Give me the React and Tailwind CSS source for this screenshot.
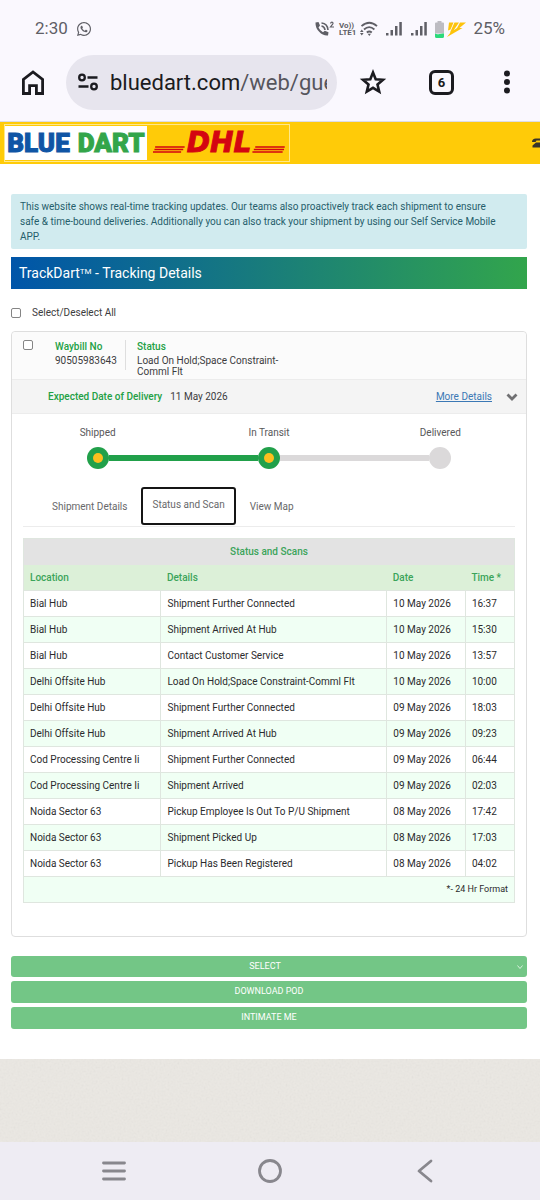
import { FaWhatsapp } from 'react-icons/fa';

const scans = [
    { location: 'Bial Hub', details: 'Shipment Further Connected', date: '10 May 2026', time: '16:37' },
    { location: 'Bial Hub', details: 'Shipment Arrived At Hub', date: '10 May 2026', time: '15:30' },
    { location: 'Bial Hub', details: 'Contact Customer Service', date: '10 May 2026', time: '13:57' },
    { location: 'Delhi Offsite Hub', details: 'Load On Hold;Space Constraint-Comml Flt', date: '10 May 2026', time: '10:00' },
    { location: 'Delhi Offsite Hub', details: 'Shipment Further Connected', date: '09 May 2026', time: '18:03' },
    { location: 'Delhi Offsite Hub', details: 'Shipment Arrived At Hub', date: '09 May 2026', time: '09:23' },
    { location: 'Cod Processing Centre Ii', details: 'Shipment Further Connected', date: '09 May 2026', time: '06:44' },
    { location: 'Cod Processing Centre Ii', details: 'Shipment Arrived', date: '09 May 2026', time: '02:03' },
    { location: 'Noida Sector 63', details: 'Pickup Employee Is Out To P/U Shipment', date: '08 May 2026', time: '17:42' },
    { location: 'Noida Sector 63', details: 'Shipment Picked Up', date: '08 May 2026', time: '17:03' },
    { location: 'Noida Sector 63', details: 'Pickup Has Been Registered', date: '08 May 2026', time: '04:02' },
];

const steps = [
    { label: 'Shipped', done: true },
    { label: 'In Transit', done: true },
    { label: 'Delivered', done: false },
];

function Signal() {
    return (
        <svg className="w-4 h-4 shrink-0" viewBox="0 0 16 16" fill="#5f5f66">
            <rect x="0" y="12" width="2.500" height="2.500" />
            <rect x="4.500" y="9" width="2.500" height="5.500" />
            <rect x="9" y="5" width="2.500" height="9.500" />
            <rect x="13.300" y="1" width="2.500" height="13.500" />
        </svg>
    );
}

function StatusBar() {
    return (
        <div className="h-[55px] px-[35px] pt-[3px] flex items-center justify-between text-[17px] text-[#5f5f66]">
            <div className="flex items-center gap-2">
                <span>2:30</span>
                <FaWhatsapp className="w-4 h-4" />
            </div>
            <div className="flex items-center">
                <svg className="w-5 h-4" viewBox="0 0 20 16" fill="none" stroke="#5f5f66">
                    <path
                        d="M.5 1.500 3.500 1l1.500 3.500L3.500 6.500q1.500 3.300 4.500 4.700l1.800-1.500 3.700 1.500-.5 3.300q-5 .5-8.800-3.700Q.3 7 .5 1.500z"
                        fill="#5f5f66"
                        stroke="none"
                    />
                    <path d="M6.500 2q6 .5 6.500 7M6.500 5q3 .5 3.500 4" strokeWidth="1.600" />
                    <path d="M15.500 2.500q.5-1.500 1.700-1.300 1.500.6.3 2.200L15.500 6h3.500" strokeWidth="1.200" />
                </svg>
                <div className="ml-1 flex flex-col text-[8px] leading-[7px] font-bold">
                    <span>Vo))</span>
                    <span>LTE1</span>
                </div>
                <svg className="w-[18px] h-4 ml-1" viewBox="0 0 18 16" fill="none" stroke="#5f5f66" strokeWidth="1.800">
                    <path d="M1.500 5.200q7.800-7 15.500 0M4 8.500q5.200-4.800 10.400 0M6.800 11.500q2.500-2 5 0" />
                    <path d="M9.300 15 7.600 12.800h3.400z" fill="#5f5f66" stroke="none" />
                    <path d="M0 11 1.800 8.600 3.600 11zM0 12l1.800 2.400L3.600 12z" fill="#5f5f66" stroke="none" />
                </svg>
                <div className="flex gap-[9px] ml-2">
                    <Signal />
                    <Signal />
                </div>
                <svg className="w-[9px] h-[17px] ml-2" viewBox="0 0 9 17">
                    <path d="M2.500 0h4v1.500H8q1 0 1 1V12.500H0v-10q0-1 1-1h1.500z" fill="#bdbcc2" />
                    <path d="M0 12.500q2 1.300 4.500.5t4.500-.5v3q0 1.500-1.500 1.500h-6Q0 17 0 15.500z" fill="#2cd97b" />
                </svg>
                <svg className="w-[19px] h-[15px] ml-[3px]" viewBox="0 0 19 15" fill="#fdc30b">
                    <path d="M2 .5h4.500L3.500 7.500 1 8.500zM7.500.5h4.500L5.500 10 3 10.500zM13 .5h6L12.500 6h3L6 11.500 0 15l3.500-4.500L10 6z" />
                </svg>
                <span className="ml-[7px]">25%</span>
            </div>
        </div>
    );
}

function BrowserBar() {
    return (
        <div className="h-[67px] pb-3 pl-[21px] pr-[22px] flex items-center border-b border-[#dddce4] text-[#1b1b20]">
            <button aria-label="Home">
                <svg className="w-6 h-7" viewBox="0 0 24 28" fill="none" stroke="currentColor" strokeWidth="2.800">
                    <path d="M2.400 25.500V11.500L12 4l9.600 7.500v14h-6.200v-7.800H8.600v7.800z" />
                </svg>
            </button>
            <label className="ml-[21px] h-[55px] flex-1 min-w-0 rounded-full bg-[#e7e5ee] pl-3 pr-[10px] flex items-center gap-3">
                <svg className="w-5 h-5 shrink-0" viewBox="0 0 20 20" fill="none" stroke="currentColor" strokeWidth="2.300">
                    <circle cx="4" cy="5.500" r="2.800" />
                    <circle cx="16" cy="14.500" r="2.800" />
                    <path d="M9.500 5.500h10M.5 14.500h10" />
                </svg>
                <span className="flex-1 min-w-0 overflow-hidden whitespace-nowrap text-[22px]">
                    bluedart.com<span className="text-[#56555d]">/web/gue</span>
                </span>
            </label>
            <button aria-label="Bookmark" className="ml-[21px]">
                <svg className="w-[30px] h-[30px]" viewBox="0 0 30 30" fill="none" stroke="currentColor" strokeWidth="2.600">
                    <path d="M15 5.500l2.700 6.700 7.300.6-5.500 4.700 1.700 7.100-6.200-3.800-6.200 3.800 1.700-7.100L5 12.800l7.300-.6z" />
                </svg>
            </button>
            <button
                aria-label="Tabs"
                className="ml-[41px] w-[25px] h-[25px] rounded-md border-[3px] border-[#1b1b20] text-[13px] leading-none font-bold flex items-center justify-center"
            >
                6
            </button>
            <button aria-label="Menu" className="ml-[42px]">
                <svg className="w-[22px] h-6" viewBox="0 0 22 24" fill="currentColor">
                    <circle cx="11" cy="3.500" r="3" />
                    <circle cx="11" cy="12" r="3" />
                    <circle cx="11" cy="20.500" r="3" />
                </svg>
            </button>
        </div>
    );
}

function SiteHeader() {
    return (
        <header className="h-[42px] pl-1 bg-[#ffcb08] flex items-center justify-between overflow-hidden">
            <div className="h-[38px] w-[286px] border border-[#ffe88a] flex items-center">
                <div className="h-[34px] w-[142px] bg-white flex items-center justify-center gap-2 text-[26px] leading-none font-black [-webkit-text-stroke:1px_currentColor]">
                    <span className="text-[#0f55a5]">BLUE</span>
                    <span className="text-[#33a54a]">DART</span>
                </div>
                {/* DHL wordmark with its speed lines */}
                <div className="flex-1 pl-[6px] pr-1 flex items-center text-[#d40511]">
                    <svg className="flex-1 h-5" viewBox="0 0 24 20" preserveAspectRatio="none" stroke="currentColor">
                        <path d="M1.500 14h21M1 16.500h20.500M0 19h20" strokeWidth="1.500" />
                    </svg>
                    <span className="font-['DejaVu_Sans'] font-bold italic text-[28px] leading-none [-webkit-text-stroke:1px_currentColor]">
                        DHL
                    </span>
                    <svg className="flex-1 h-5" viewBox="0 0 24 20" preserveAspectRatio="none" stroke="currentColor">
                        <path d="M3 14h21M2 16.500h21.500M1 19h21.500" strokeWidth="1.500" />
                    </svg>
                </div>
            </div>
            <svg className="w-2 h-[10px]" viewBox="0 0 8 10" fill="#38342a">
                <path d="M0 4Q0 .5 4 .5h4v2H4.500L3.500 4zM.5 9.500V7.500L4 4.500h4v5z" />
            </svg>
        </header>
    );
}

function Progress() {
    return (
        <div className="grid grid-cols-3 pt-3">
            {steps.map((step, i) => (
                <div key={step.label} className="flex flex-col items-center gap-[7px]">
                    <span className="text-[10px] leading-[14px] text-[#58585a]">{step.label}</span>
                    <div className="w-full flex items-center">
                        <div className={`flex-1 h-[6px] ${i === 0 ? '' : step.done ? 'bg-[#21a04a]' : 'bg-[#dbd9da]'}`} />
                        <div
                            className={`w-[22px] h-[22px] rounded-full flex items-center justify-center ${step.done ? 'bg-[#21a04a]' : 'bg-[#dbd9da]'}`}
                        >
                            {step.done && <div className="w-[10px] h-[10px] rounded-full bg-[#fcbf1e]" />}
                        </div>
                        <div
                            className={`flex-1 h-[6px] ${i === 2 ? '' : steps[i + 1].done ? 'bg-[#21a04a]' : 'bg-[#dbd9da]'}`}
                        />
                    </div>
                </div>
            ))}
        </div>
    );
}

function ScanTable() {
    return (
        <table className="w-full table-fixed border-collapse border border-[#dfe6df] text-[10px] text-left text-[#2b2b2d]">
            <colgroup>
                <col className="w-[28%]" />
                <col className="w-[46%]" />
                <col className="w-[16%]" />
                <col className="w-[10%]" />
            </colgroup>
            <thead className="text-[#3ba45a]">
                <tr className="h-[26px] bg-[#e3e3e3]">
                    <th colSpan={4} className="text-center font-medium">Status and Scans</th>
                </tr>
                <tr className="h-[26px] bg-[#dcf0d8]">
                    <th className="px-[6px] font-medium">Location</th>
                    <th className="px-[6px] font-medium">Details</th>
                    <th className="px-[6px] font-medium">Date</th>
                    <th className="px-[6px] font-medium whitespace-nowrap">Time *</th>
                </tr>
            </thead>
            <tbody>
                {scans.map((scan, i) => (
                    <tr key={i} className="h-[26px] bg-white even:bg-[#f0fff4]">
                        <td className="px-[6px] border border-[#dfe6df]">{scan.location}</td>
                        <td className="px-[6px] border border-[#dfe6df]">{scan.details}</td>
                        <td className="px-[6px] border border-[#dfe6df]">{scan.date}</td>
                        <td className="px-[6px] border border-[#dfe6df]">{scan.time}</td>
                    </tr>
                ))}
                <tr className="h-[26px] bg-[#f0fff4]">
                    <td colSpan={4} className="px-[6px] text-right text-[9px]">*- 24 Hr Format</td>
                </tr>
            </tbody>
        </table>
    );
}

function Shipment() {
    return (
        <section className="mt-[11px] border border-[#dedede] rounded bg-white pb-[33px]">
            <div className="h-[47px] pt-2 pl-[11px] bg-[#fbfbfb] rounded-t flex items-start text-[10px] leading-[11px] text-[#3c3c3e]">
                <input
                    type="checkbox"
                    aria-label="Select waybill 90505983643"
                    className="appearance-none w-[10px] h-[10px] border border-[#858585] rounded-[2px] bg-white"
                />
                <div className="ml-[22px] w-[71px] pb-1 border-r border-[#dedede]">
                    <div className="mb-[2px] leading-[13px] font-medium text-[#23a045]">Waybill No</div>
                    <div>90505983643</div>
                </div>
                <div className="ml-[11px] w-[160px]">
                    <div className="mb-[2px] leading-[13px] font-medium text-[#23a045]">Status</div>
                    <div>Load On Hold;Space Constraint-Comml Flt</div>
                </div>
            </div>
            <div className="h-[35px] pl-9 pr-2 bg-[#f4f4f4] border-y border-[#ececec] flex items-center text-[10px]">
                <span className="font-medium text-[#23a045]">Expected Date of Delivery</span>
                <span className="ml-2 text-[#3c3c3e]">11 May 2026</span>
                <a href="#details" className="ml-auto mr-[14px] underline text-[#3b78b5]">More Details</a>
                <button aria-label="Collapse">
                    <svg className="w-3 h-3" viewBox="0 0 12 12" fill="none" stroke="#707072" strokeWidth="2.800">
                        <path d="M1.500 3.500 6 8l4.500-4.500" />
                    </svg>
                </button>
            </div>
            <Progress />
            <div className="px-[11px]">
                <div className="mt-[18px] pl-[17px] flex items-center border-b border-[#ececec] text-[10px] text-[#68686a]">
                    <button className="px-3">Shipment Details</button>
                    <button className="mx-[2px] mb-px h-[38px] px-[9px] pb-1 border-2 border-[#151515] rounded-[3px]">Status and Scan</button>
                    <button className="px-3">View Map</button>
                </div>
                <div className="mt-[11px]">
                    <ScanTable />
                </div>
            </div>
        </section>
    );
}

function Actions() {
    return (
        <div className="mt-[19px] flex flex-col gap-1 text-[9px] text-white">
            <div className="relative">
                <select
                    aria-label="Select an action"
                    className="block w-full h-[21px] pr-2 appearance-none rounded-[3px] bg-[#73c686] [text-align-last:center]"
                >
                    <option>SELECT</option>
                </select>
                <svg className="absolute right-1 top-2 w-[6px] h-[6px]" viewBox="0 0 6 6" fill="none" stroke="#d5f0dc">
                    <path d="M.5 1.500 3 4.500l2.500-3" />
                </svg>
            </div>
            <button className="h-[22px] rounded-[3px] bg-[#73c686]">DOWNLOAD POD</button>
            <button className="h-[22px] rounded-[3px] bg-[#73c686]">INTIMATE ME</button>
        </div>
    );
}

export default function App() {
    return (
        <div className="min-h-screen flex flex-col bg-[#faf8fe] font-[Roboto,sans-serif]">
            <StatusBar />
            <BrowserBar />
            <SiteHeader />
            <main className="bg-white py-[30px] pl-[11px] pr-[13px]">
                <p className="py-[5px] pl-[9px] pr-6 rounded-[2px] bg-[#d1ebef] text-[10px] leading-[15px] text-[#265e6b]">
                    This website shows real-time tracking updates. Our teams also proactively track each shipment to ensure
                    safe &amp; time-bound deliveries. Additionally you can also track your shipment by using our Self Service Mobile
                    APP.
                </p>
                <h1 className="mt-2 h-8 px-2 flex items-center bg-linear-to-r/srgb from-[#0055a9] to-[#32a54c] text-[14px] text-white">
                    <span>TrackDart<sup className="text-[8px]">TM</sup> - Tracking Details</span>
                </h1>
                <label className="mt-4 flex items-center gap-[11px] text-[10px] leading-[15px] text-[#3c3c3e]">
                    <input type="checkbox" className="appearance-none w-[10px] h-[10px] border border-[#858585] rounded-[2px]" />
                    Select/Deselect All
                </label>
                <Shipment />
                <Actions />
            </main>
            {/* Paper texture under the page */}
            <div className="relative flex-1 min-h-20 bg-[#ebe8e3]">
                <svg className="absolute inset-0 w-full h-full opacity-10">
                    <filter id="paper">
                        <feTurbulence type="fractalNoise" baseFrequency="0.5" numOctaves="2" />
                        <feColorMatrix type="saturate" values="0" />
                    </filter>
                    <rect width="100%" height="100%" filter="url(#paper)" />
                </svg>
            </div>
            <nav className="h-[58px] px-[101px] bg-[#eeecf3] flex items-center justify-between text-[#88878d]">
                <button aria-label="Recent apps">
                    <svg className="w-[26px] h-[26px]" viewBox="0 0 26 26" stroke="currentColor" strokeWidth="2.800" strokeLinecap="round">
                        <path d="M2.500 5h21M2.500 13h21M2.500 21h21" />
                    </svg>
                </button>
                <button aria-label="Home screen">
                    <svg className="w-[26px] h-[26px]" viewBox="0 0 26 26" fill="none" stroke="currentColor" strokeWidth="2.800">
                        <circle cx="13" cy="13" r="10.500" />
                    </svg>
                </button>
                <button aria-label="Back">
                    <svg className="w-[26px] h-[26px]" viewBox="0 0 26 26" fill="none" stroke="currentColor" strokeWidth="2.800" strokeLinecap="round" strokeLinejoin="round">
                        <path d="M18 3 6 13l12 10" />
                    </svg>
                </button>
            </nav>
        </div>
    );
}
